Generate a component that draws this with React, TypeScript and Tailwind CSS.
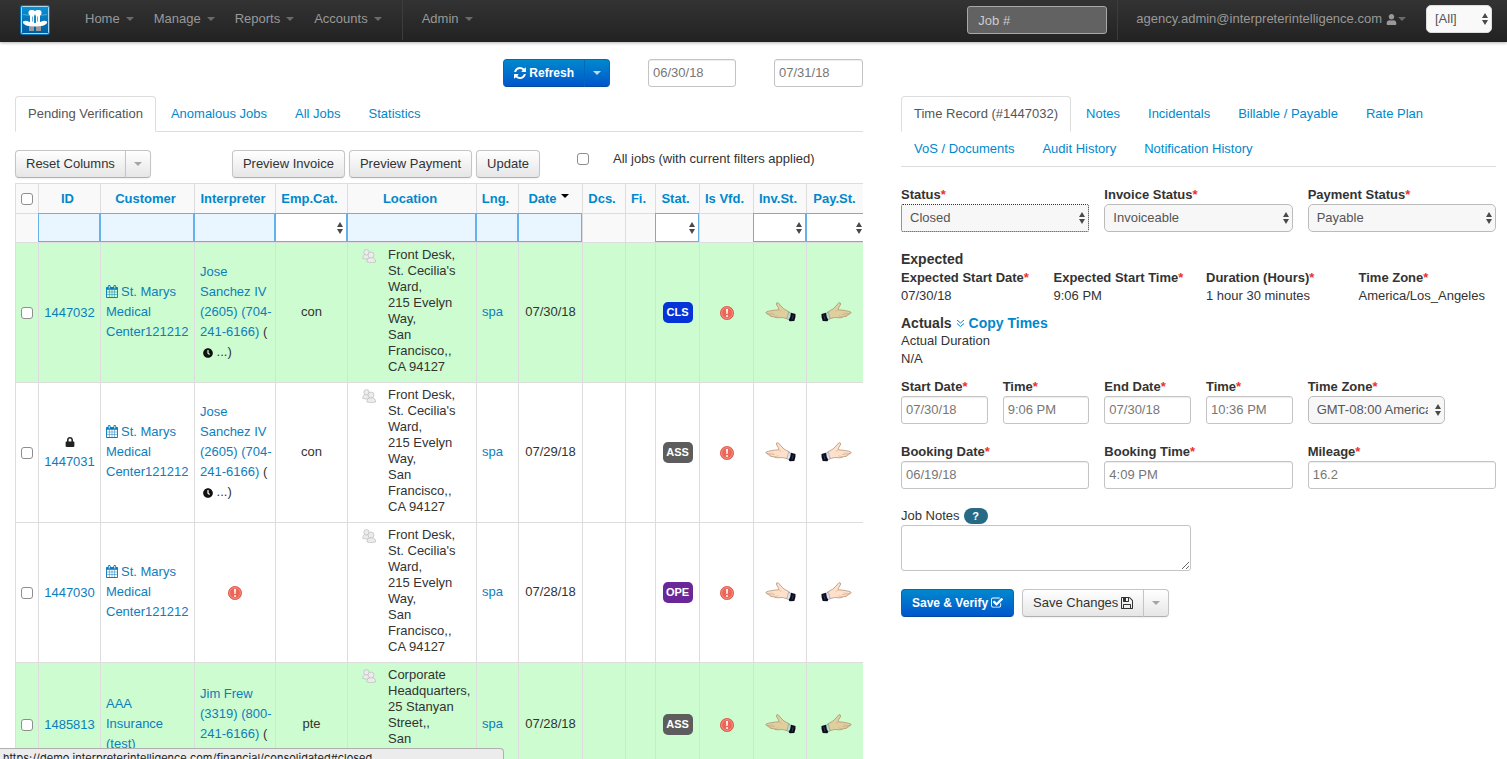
import type { ReactNode } from "react";
import { FaClock, FaLock, FaUser } from "react-icons/fa";

const ICONS = {
    refresh:
        "M1511 928q0 5-1 7-64 268-268 434.5t-478 166.5q-146 0-282.5-55t-243.5-157l-129 129q-19 19-45 19t-45-19-19-45v-448q0-26 19-45t45-19h448q26 0 45 19t19 45-19 45l-137 137q71 66 161 102t187 36q134 0 250-65t186-179q11-17 53-117 8-23 30-23h192q13 0 22.5 9.5t9.5 22.5zm25-800v448q0 26-19 45t-45 19h-448q-26 0-45-19t-19-45 19-45l138-138q-148-137-349-137-134 0-250 65t-186 179q-11 17-53 117-8 23-30 23h-199q-13 0-22.5-9.5t-9.5-22.5v-7q65-268 270-434.5t480-166.5q146 0 284 55.5t245 156.5l130-129q19-19 45-19t45 19 19 45z",
    calendar:
        "M192 1664h288v-288h-288v288zm352 0h320v-288h-320v288zm-352-352h288v-320h-288v320zm352 0h320v-320h-320v320zm-352-384h288v-288h-288v288zm736 736h320v-288h-320v288zm-384-736h320v-288h-320v288zm768 736h288v-288h-288v288zm-384-352h320v-320h-320v320zm-352-864v-288q0-13-9.5-22.5t-22.5-9.5h-64q-13 0-22.5 9.5t-9.5 22.5v288q0 13 9.5 22.5t22.5 9.5h64q13 0 22.5-9.5t9.5-22.5zm736 864h288v-320h-288v320zm-384-384h320v-288h-320v288zm384 0h288v-288h-288v288zm32-480v-288q0-13-9.5-22.5t-22.5-9.5h-64q-13 0-22.5 9.5t-9.5 22.5v288q0 13 9.5 22.5t22.5 9.5h64q13 0 22.5-9.5t9.5-22.5zm384-64v1280q0 52-38 90t-90 38h-1408q-52 0-90-38t-38-90v-1280q0-52 38-90t90-38h128v-96q0-66 47-113t113-47h64q66 0 113 47t47 113v96h384v-96q0-66 47-113t113-47h64q66 0 113 47t47 113v96h128q52 0 90 38t38 90z",
    check:
        "M1472 930v318q0 119-84.5 203.5t-203.5 84.5h-832q-119 0-203.5-84.5t-84.5-203.5v-832q0-119 84.5-203.5t203.5-84.5h832q63 0 117 25 15 7 18 23 3 17-9 29l-49 49q-10 10-23 10-3 0-9-2-23-6-45-6h-832q-66 0-113 47t-47 113v832q0 66 47 113t113 47h832q66 0 113-47t47-113v-254q0-13 9-22l64-64q10-10 23-10 6 0 12 3 20 8 20 29zm231-489l-814 814q-24 24-57 24t-57-24l-430-430q-24-24-24-57t24-57l110-110q24-24 57-24t57 24l263 263 647-647q24-24 57-24t57 24l110 110q24 24 24 57t-24 57z",
    save:
        "M512 1536h768v-384h-768v384zm896 0h128v-896q0-14-10-38.5t-20-34.5l-281-281q-10-10-34-20t-39-10v416q0 40-28 68t-68 28h-576q-40 0-68-28t-28-68v-416h-128v1280h128v-416q0-40 28-68t68-28h832q40 0 68 28t28 68v416zm-384-928v-320q0-13-9.5-22.5t-22.5-9.5h-192q-13 0-22.5 9.5t-9.5 22.5v320q0 13 9.5 22.5t22.5 9.5h192q13 0 22.5-9.5t9.5-22.5zm640 32v928q0 40-28 68t-68 28h-1344q-40 0-68-28t-28-68v-1344q0-40 28-68t68-28h928q40 0 88 20t76 48l280 280q28 28 48 76t20 88z",
};

const viewBoxes = {
    refresh: "0 0 1536 1536",
    calendar: "64 0 1664 1792",
    check: "64 128 1664 1536",
    save: "128 128 1536 1536",
};

function Icon({ name, className = "size-3" }: { name: keyof typeof ICONS; className?: string }) {
    return (
        <svg viewBox={viewBoxes[name]} fill="currentColor" className={`inline-block ${className}`} aria-hidden="true">
            <path d={ICONS[name]} />
        </svg>
    );
}

function Caret({ className = "" }: { className?: string }) {
    return (
        <svg viewBox="0 0 8 4" fill="currentColor" className={`inline-block h-1 w-2 ${className}`} aria-hidden="true">
            <path d="M0 0h8L4 4z" />
        </svg>
    );
}

function Logo() {
    return (
        <svg viewBox="0 0 30 30" className="size-[30px]" aria-hidden="true">
            <defs>
                <linearGradient id="logo-bg" x1="0" y1="0" x2="0" y2="1">
                    <stop offset="0" stopColor="#0a93d6" />
                    <stop offset="1" stopColor="#005b9c" />
                </linearGradient>
            </defs>
            <rect x=".5" y=".5" width="29" height="29" rx="1.5" fill="url(#logo-bg)" stroke="#0b6fae" />
            <rect x="1.5" y="1.5" width="27" height="27" rx="1" fill="none" stroke="#a9d6f0" />
            <path d="M3 9.500q12 3 24 0" fill="none" stroke="#5db8e6" strokeWidth=".8" />
            {/* legs, then the two figures and the brim around them */}
            <path d="M9 20.500h5v5.500H9zM16 20.500h5v5.500h-5z" fill="#9a9a9a" />
            <path d="M3 16.500q3-1.500 6 .3 6 2 12 0 3-1.800 6-.3.800 2.500-4 4.200-8 1.500-16 0-4.800-1.700-4-4.200z" fill="#fff" />
            <path d="M10 9.500h4.200v9.500H10zM15.800 9.500H20v9.500h-4.200z" fill="#fff" />
            <rect x="8.500" y="5" width="6.700" height="5.500" rx="2.500" fill="#fff" />
            <rect x="14.800" y="5" width="6.700" height="5.500" rx="2.500" fill="#fff" />
            <path d="M14.400 11h1.200v7h-1.200zM12 11.500h.6v5H12zM17.400 11.500h.6v5h-.6z" fill="#0076bd" />
        </svg>
    );
}

function Hand({ tan, flip }: { tan: boolean; flip?: boolean }) {
    const skin = tan ? "#dfcf9f" : "#ffe0cb";
    return (
        <svg
            viewBox="0 0 31 20"
            className={`inline-block h-5 w-[31px] ${flip ? "-scale-x-100" : ""}`}
            aria-hidden="true"
        >
            <path
                d="M.8 11Q1 9.500 3.500 9.200L9 8.200 13.500 7.800Q14 7 13.200 5.500L11.200 2Q11.500 .3 13.200 .8L16 4 19 7 24.500 10 23 16.500Q20 16.500 17.500 15.500L12 15.800Q9 15.500 9 14.800L5.500 14.300Q4.300 13.800 5 13L3 12.600Q2 12.200 2.600 11.500z"
                fill={skin}
                stroke="#a98a6c"
                strokeWidth=".7"
            />
            <path
                d="M2.600 11.500l6-.4M5 13l5-.6M9 14.800l4.500-1M13.500 7.800q2 .3 2.500 2"
                fill="none"
                stroke="#c4a07c"
                strokeWidth=".5"
            />
            <path d="M23.500 10.300l2.800.9-1.600 6.800-2.900-1z" fill={tan ? "#b5dcc8" : "#dbe3f7"} stroke="#777" strokeWidth=".4" />
            <path d="M26 10.700l4.500 1.200q.5 3-1.200 7l-4.500.3q-1-.7-1-1.500 2-3 2.200-7z" fill="#0b0c1c" />
            <path d="M28.300 13l-1.300 4.500" stroke="#63667e" strokeWidth=".5" />
        </svg>
    );
}

function Alert() {
    return (
        <svg viewBox="0 0 14 14" className="inline-block size-[14px]" role="img" aria-label="Not verified">
            <circle cx="7" cy="7" r="6.600" fill="#ec6658" stroke="#dd5649" strokeWidth=".8" />
            <circle cx="7" cy="7" r="5.400" fill="none" stroke="#f7b4aa" strokeWidth=".5" />
            <path d="M6 3h2l-.4 5H6.400z" fill="#fff" />
            <circle cx="7" cy="10" r="1" fill="#fff" />
        </svg>
    );
}

function People() {
    return (
        <svg viewBox="0 0 14 14" className="mt-[2px] size-[14px] shrink-0" aria-hidden="true">
            <g fill="#ececec" stroke="#b4b4b4" strokeWidth=".6">
                <path d="M.8 9.500q-.3-4 3.500-4.300 4 .3 3.700 4.300-3.500 1.200-7.200 0z" />
                <circle cx="4.500" cy="3.300" r="2.700" />
                <path d="M5 13q-.5-4 4.200-4.500 4.700.5 4.400 4.500-4.300 1.200-8.600 0z" />
                <circle cx="9" cy="6" r="3" />
            </g>
        </svg>
    );
}

function UpDown({ className }: { className: string }) {
    return (
        <svg
            viewBox="0 0 6 12"
            className={`pointer-events-none absolute top-1/2 h-3 w-[6px] -translate-y-1/2 fill-[#4a4a4a] ${className}`}
            aria-hidden="true"
        >
            <path d="M3 0l3 5H0zM3 12l3-5H0z" />
        </svg>
    );
}

function Checkbox({ label, id }: { label?: string; id?: string }) {
    return (
        <input
            type="checkbox"
            id={id}
            aria-label={label}
            className="size-3 shrink-0 appearance-none rounded-[3px] border border-[#8e8e8e] bg-white align-middle"
        />
    );
}

const btn =
    "inline-flex h-7 items-center border border-[#c5c5c5] border-b-[#b0b0b0] bg-linear-to-b from-white to-[#e6e6e6] text-[#333] shadow-[0_1px_2px_rgba(0,0,0,0.06)]";
const btnPrimary =
    "inline-flex h-7 items-center border border-[#0068b8] border-b-[#0048a0] bg-linear-to-b from-[#0088cc] to-[#0055cc] text-xs font-bold text-white";
const field =
    "h-7 w-full rounded-[3px] border border-[#c4c4c4] bg-white px-1 pb-[2px] text-[#777] shadow-[inset_0_1px_1px_rgba(0,0,0,0.075)]";

function NavLink({ children }: { children: ReactNode }) {
    return (
        <a href="#" className="flex items-center gap-[6px] px-[10px] text-[#999]">
            {children}
            <Caret className="text-[#6a6a6a]" />
        </a>
    );
}

function Navbar() {
    return (
        <header className="flex h-[42px] items-stretch bg-linear-to-b from-[#333] to-[#222] pr-[15px] pl-5 shadow-[0_1px_3px_rgba(0,0,0,0.3)]">
            <a href="#" className="pt-[5px]" aria-label="Dashboard">
                <Logo />
            </a>
            <nav className="ml-[25px] flex pb-1">
                <NavLink>Home</NavLink>
                <NavLink>Manage</NavLink>
                <NavLink>Reports</NavLink>
                <NavLink>Accounts</NavLink>
            </nav>
            <div className="mb-[2px] ml-[10px] w-px bg-[#3c3c3c]" />
            <nav className="ml-[9px] flex pb-1">
                <NavLink>Admin</NavLink>
            </nav>
            <div className="ml-auto flex items-stretch">
                <input
                    type="text"
                    aria-label="Job number"
                    placeholder="Job #"
                    className="mt-[6px] h-7 w-[140px] rounded-[3px] border border-[#a8a8a8] bg-[#626262] px-[10px] text-[13px] placeholder:text-[#ccc]"
                />
                <div className="mb-[2px] ml-[10px] w-px bg-[#3c3c3c]" />
                <a href="#" className="ml-[18px] flex items-center pb-1 text-[#999]">
                    agency.admin@interpreterintelligence.com
                    <FaUser className="mr-px ml-1 size-[11px]" />
                    <Caret className="text-[#6a6a6a]" />
                </a>
                <div className="relative mt-[5px] ml-5 h-7">
                    <select
                        aria-label="Scope"
                        className="h-7 w-[66px] appearance-none rounded-[5px] border border-[#ddd] bg-[#f9f9f9] px-2 text-[#555]"
                    >
                        <option>[All]</option>
                    </select>
                    <UpDown className="right-1" />
                </div>
            </div>
        </header>
    );
}

function Tabs({ items }: { items: string[] }) {
    return (
        <ul className="flex flex-wrap border-b border-[#ddd]">
            {items.map((item, i) => (
                <li key={item} className="mr-[2px] -mb-px">
                    <a
                        href="#"
                        className={
                            i === 0
                                ? "block rounded-t border border-[#ddd] border-b-white bg-white px-3 py-2 leading-[18px] text-[#555]"
                                : "block border border-transparent px-3 py-2 leading-[18px] text-[#0088cc]"
                        }
                    >
                        {item}
                    </a>
                </li>
            ))}
        </ul>
    );
}

function SplitCaret({ label }: { label: string }) {
    return (
        <button type="button" aria-label={label} className={`${btn} -ml-px rounded-r px-2`}>
            <Caret className="text-[#a5a5a5]" />
        </button>
    );
}

type Column = { title: string; width: string; filter: "text" | "select" | "none" };

const columns: Column[] = [
    { title: "ID", width: "w-[62px]", filter: "text" },
    { title: "Customer", width: "w-[94px]", filter: "text" },
    { title: "Interpreter", width: "w-[81px]", filter: "text" },
    { title: "Emp.Cat.", width: "w-[72px]", filter: "select" },
    { title: "Location", width: "w-[129px]", filter: "text" },
    { title: "Lng.", width: "w-[42px]", filter: "text" },
    { title: "Date", width: "w-[64px]", filter: "text" },
    { title: "Dcs.", width: "w-[43px]", filter: "none" },
    { title: "Fi.", width: "w-[30px]", filter: "none" },
    { title: "Stat.", width: "w-[44px]", filter: "select" },
    { title: "Is Vfd.", width: "w-[54px]", filter: "none" },
    { title: "Inv.St.", width: "w-[53px]", filter: "select" },
    { title: "Pay.St.", width: "w-[60px]", filter: "select" },
];

type Job = {
    id: string;
    locked?: boolean;
    customer: string;
    calendar?: boolean;
    interpreter?: string[];
    category?: string;
    location: string;
    date: string;
    status: "CLS" | "ASS" | "OPE";
    highlighted?: boolean;
};

const frontDesk = "Front Desk,\nSt. Cecilia's\nWard,\n215 Evelyn\nWay,\nSan\nFrancisco,,\nCA 94127";
const stMarys = "St. Marys\nMedical\nCenter121212";
const jose = ["Jose", "Sanchez IV", "(2605) (704-", "241-6166)"];

const jobs: Job[] = [
    { id: "1447032", customer: stMarys, calendar: true, interpreter: jose, category: "con", location: frontDesk, date: "07/30/18", status: "CLS", highlighted: true },
    { id: "1447031", locked: true, customer: stMarys, calendar: true, interpreter: jose, category: "con", location: frontDesk, date: "07/29/18", status: "ASS" },
    { id: "1447030", customer: stMarys, calendar: true, location: frontDesk, date: "07/28/18", status: "OPE" },
    {
        id: "1485813",
        customer: "AAA\nInsurance\n(test)",
        interpreter: ["Jim Frew", "(3319) (800-", "241-6166)"],
        category: "pte",
        location: "Corporate\nHeadquarters,\n25 Stanyan\nStreet,,\nSan\nFrancisco,,\nCA 94117",
        date: "07/28/18",
        status: "ASS",
        highlighted: true,
    },
];

const statusColors = {
    CLS: "bg-[#0433d8]",
    ASS: "bg-[#5d5d5d]",
    OPE: "bg-[#6a2799]",
};

const cell = "border border-[#ddd]";

function JobRow({ job }: { job: Job }) {
    return (
        <tr className={job.highlighted ? "bg-[#ccfccf]" : "bg-white"}>
            <td className={`${cell} text-center`}>
                <Checkbox label={`Select job ${job.id}`} />
            </td>
            <td className={`${cell} text-center`}>
                {job.locked && <FaLock className="mx-auto mt-1 mb-[5px] size-[10px] text-[#222]" />}
                <a href="#" className="text-[#0e7dbd]">{job.id}</a>
            </td>
            <td className={`${cell} pb-px pl-[5px] whitespace-pre`}>
                <a href="#" className="text-[#0e7dbd]">
                    {job.calendar && <Icon name="calendar" className="mr-[3px] h-[13px] w-3 align-[-2px]" />}
                    {job.customer}
                </a>
            </td>
            <td className={`${cell} pb-px pl-[5px] whitespace-pre ${job.interpreter ? "" : "pr-[5px] text-center"}`}>
                {job.interpreter ? (
                    <>
                        <a href="#" className="text-[#0e7dbd]">
                            {job.interpreter.map((line, i) => (
                                <span key={line}>
                                    {i > 0 && <br />}
                                    {line}
                                </span>
                            ))}
                        </a>
                        <span> (</span>
                        <div className="pl-[3px]">
                            <FaClock className="inline-block size-[10px] align-[-2px] text-[#111]" /> ...)
                        </div>
                    </>
                ) : (
                    <Alert />
                )}
            </td>
            <td className={`${cell} pb-px text-center`}>{job.category}</td>
            <td className={`${cell} align-top`}>
                <div className="flex gap-3 pt-1 pb-[7px] pl-[14px]">
                    <People />
                    <div className="leading-4 whitespace-pre">{job.location}</div>
                </div>
            </td>
            <td className={`${cell} pb-px pl-[5px]`}>
                <a href="#" className="text-[#0e7dbd]">spa</a>
            </td>
            <td className={`${cell} pb-px text-center`}>{job.date}</td>
            <td className={cell} />
            <td className={cell} />
            <td className={`${cell} text-center`}>
                <span className={`inline-block w-[30px] rounded-[5px] text-[11px] leading-[21px] font-bold text-white ${statusColors[job.status]}`}>
                    {job.status}
                </span>
            </td>
            <td className={`${cell} pb-px text-center`}>
                <Alert />
            </td>
            <td className={`${cell} pb-px text-center`}>
                <Hand tan={!!job.highlighted} />
            </td>
            <td className={`${cell} pb-px text-center`}>
                <Hand tan={!!job.highlighted} flip />
            </td>
        </tr>
    );
}

function JobsTable() {
    return (
        <div className="mt-[5px] overflow-hidden">
            <table className="w-full min-w-[851px] table-fixed border-collapse leading-5">
                <thead className="bg-[#f9f9f9]">
                    <tr className="h-[30px]">
                        <th className={`${cell} w-[23px]`}>
                            <Checkbox label="Select all jobs" />
                        </th>
                        {columns.map((c) => (
                            <th key={c.title} className={`${cell} ${c.width} pt-px pr-1 text-[#0088cc]`}>
                                {c.title}
                                {c.title === "Date" && <Caret className="ml-1 align-[5px] text-black" />}
                            </th>
                        ))}
                    </tr>
                    <tr className="h-[29px]">
                        <td className={cell} />
                        {columns.map((c) => (
                            <td key={c.title} className={`${cell} p-0`}>
                                {c.filter === "text" && (
                                    <input
                                        type="text"
                                        aria-label={`Filter ${c.title}`}
                                        className="relative -mt-px -ml-px block h-[29px] w-[calc(100%+1px)] border border-[#66b2e8] bg-[#eaf6ff] px-1"
                                    />
                                )}
                                {c.filter === "select" && (
                                    <div className="relative -mt-px -ml-px">
                                        <select
                                            aria-label={`Filter ${c.title}`}
                                            className="block h-[29px] w-full appearance-none border border-[#66b2e8] bg-white"
                                        />
                                        <UpDown className="right-1" />
                                    </div>
                                )}
                            </td>
                        ))}
                    </tr>
                </thead>
                <tbody>
                    {jobs.map((job) => (
                        <JobRow key={job.id} job={job} />
                    ))}
                </tbody>
            </table>
        </div>
    );
}

function JobsPanel() {
    return (
        <section className="min-w-0">
            <div className="mb-[9px] flex justify-end gap-[38px]">
                <div className="flex">
                    <button type="button" className={`${btnPrimary} gap-[3px] rounded-l px-[10px]`}>
                        <Icon name="refresh" />
                        Refresh
                    </button>
                    <button type="button" aria-label="Refresh options" className={`${btnPrimary} -ml-px rounded-r px-2`}>
                        <Caret className="text-[#bcdcf2]" />
                    </button>
                </div>
                <input type="text" aria-label="From date" defaultValue="06/30/18" className={`${field} max-w-[88px]`} />
                <input type="text" aria-label="To date" defaultValue="07/31/18" className={`${field} max-w-[89px]`} />
            </div>
            <Tabs items={["Pending Verification", "Anomalous Jobs", "All Jobs", "Statistics"]} />
            <div className="mt-[18px] flex">
                <button type="button" className={`${btn} rounded-l px-[10px]`}>Reset Columns</button>
                <SplitCaret label="Column options" />
                <div className="ml-[81px] flex gap-1">
                    <button type="button" className={`${btn} rounded px-[10px]`}>Preview Invoice</button>
                    <button type="button" className={`${btn} rounded px-[10px]`}>Preview Payment</button>
                    <button type="button" className={`${btn} rounded px-[10px]`}>Update</button>
                </div>
                <div className="ml-[37px] flex h-[18px] items-center gap-6">
                    <Checkbox id="all-jobs" />
                    <label htmlFor="all-jobs">All jobs (with current filters applied)</label>
                </div>
            </div>
            <JobsTable />
        </section>
    );
}

function Label({ htmlFor, children }: { htmlFor: string; children: ReactNode }) {
    return (
        <label htmlFor={htmlFor} className="block font-bold whitespace-nowrap">
            {children}
            <span className="text-[#f0302c]">*</span>
        </label>
    );
}

function TextField({ id, label, value }: { id: string; label: string; value: string }) {
    return (
        <div>
            <Label htmlFor={id}>{label}</Label>
            <input id={id} type="text" defaultValue={value} className={field} />
        </div>
    );
}

type SelectFieldProps = { id: string; label: string; value: string; focused?: boolean; className?: string };

function SelectField({ id, label, value, focused, className = "" }: SelectFieldProps) {
    return (
        <div className={className}>
            <Label htmlFor={id}>{label}</Label>
            <div className="relative">
                <select
                    id={id}
                    className={`block h-7 w-full appearance-none border bg-[#f7f7f7] pr-4 pl-2 text-[#555] ${focused ? "rounded-[2px] border-dotted border-[#333]" : "rounded-[5px] border-[#bbb]"}`}
                >
                    <option>{value}</option>
                </select>
                <UpDown className="right-1" />
            </div>
        </div>
    );
}

function Expected({ label, value }: { label: string; value: string }) {
    return (
        <div>
            <dt className="font-bold whitespace-nowrap">
                {label}
                <span className="text-[#f0302c]">*</span>
            </dt>
            <dd>{value}</dd>
        </div>
    );
}

function TimeRecord() {
    return (
        <section className="min-w-0 pt-[37px] leading-[18px]">
            <Tabs
                items={[
                    "Time Record (#1447032)",
                    "Notes",
                    "Incidentals",
                    "Billable / Payable",
                    "Rate Plan",
                    "VoS / Documents",
                    "Audit History",
                    "Notification History",
                ]}
            />
            <form className="pt-[19px]">
                <div className="grid grid-cols-3 gap-[15px]">
                    <SelectField id="status" label="Status" value="Closed" focused />
                    <SelectField id="invoice-status" label="Invoice Status" value="Invoiceable" />
                    <SelectField id="payment-status" label="Payment Status" value="Payable" />
                </div>
                <h4 className="mt-[18px] text-sm leading-[19px] font-bold">Expected</h4>
                <dl className="grid grid-cols-4 gap-[15px]">
                    <Expected label="Expected Start Date" value="07/30/18" />
                    <Expected label="Expected Start Time" value="9:06 PM" />
                    <Expected label="Duration (Hours)" value="1 hour 30 minutes" />
                    <Expected label="Time Zone" value="America/Los_Angeles" />
                </dl>
                <h4 className="mt-[9px] flex items-center gap-1 text-sm leading-[18px] font-bold">
                    Actuals
                    <a href="#" className="flex items-center gap-1 text-[#0088cc]">
                        <svg viewBox="0 0 9 9" className="size-[9px]" fill="none" stroke="currentColor" aria-hidden="true">
                            <path d="M1 1l3.500 3L8 1M1 4.500l3.500 3L8 4.500" />
                        </svg>
                        Copy Times
                    </a>
                </h4>
                <p>Actual Duration</p>
                <p>N/A</p>
                <div className="mt-[10px] grid grid-cols-6 gap-[15px]">
                    <TextField id="start-date" label="Start Date" value="07/30/18" />
                    <TextField id="start-time" label="Time" value="9:06 PM" />
                    <TextField id="end-date" label="End Date" value="07/30/18" />
                    <TextField id="end-time" label="Time" value="10:36 PM" />
                    <SelectField id="time-zone" label="Time Zone" value="GMT-08:00 America/Los_Angeles" className="col-span-2 w-[137px]" />
                </div>
                <div className="mt-[19px] grid grid-cols-3 gap-[15px]">
                    <TextField id="booking-date" label="Booking Date" value="06/19/18" />
                    <TextField id="booking-time" label="Booking Time" value="4:09 PM" />
                    <TextField id="mileage" label="Mileage" value="16.2" />
                </div>
                <div className="mt-[18px] grid grid-cols-2 gap-[15px]">
                    <div>
                        <div className="flex items-center gap-1">
                            <label htmlFor="job-notes">Job Notes</label>
                            <button type="button" className="h-4 w-6 rounded-full bg-[#276a85] text-[11px] leading-4 font-bold text-white">
                                ?
                            </button>
                        </div>
                        <textarea id="job-notes" className="block h-[46px] w-full rounded-[3px] border border-[#c4c4c4] bg-white p-1" />
                    </div>
                </div>
                <div className="mt-[18px] flex gap-2">
                    <button type="button" className={`${btnPrimary} gap-[3px] rounded px-[10px]`}>
                        Save &amp; Verify
                        <Icon name="check" />
                    </button>
                    <div className="flex">
                        <button type="button" className={`${btn} gap-[3px] rounded-l px-[10px]`}>
                            Save Changes
                            <Icon name="save" />
                        </button>
                        <SplitCaret label="More save options" />
                    </div>
                </div>
            </form>
        </section>
    );
}

export default function App() {
    return (
        <div className="h-screen overflow-hidden bg-white font-['Liberation_Sans',Arial,sans-serif] text-[13px] text-[#333]">
            <Navbar />
            <main className="grid grid-cols-[848fr_595fr] gap-[38px] pt-[17px] pr-[11px] pl-[15px]">
                <JobsPanel />
                <TimeRecord />
            </main>
            <div className="fixed bottom-0 left-0 h-[11px] w-[504px] overflow-hidden rounded-tr border-t border-r border-[#b0b0b0] bg-[#ececec] pl-[3px] font-[Inter,sans-serif] text-[11px] leading-[18px] text-[#222]">
                https://demo.interpreterintelligence.com/financial/consolidated#closed
            </div>
        </div>
    );
}
